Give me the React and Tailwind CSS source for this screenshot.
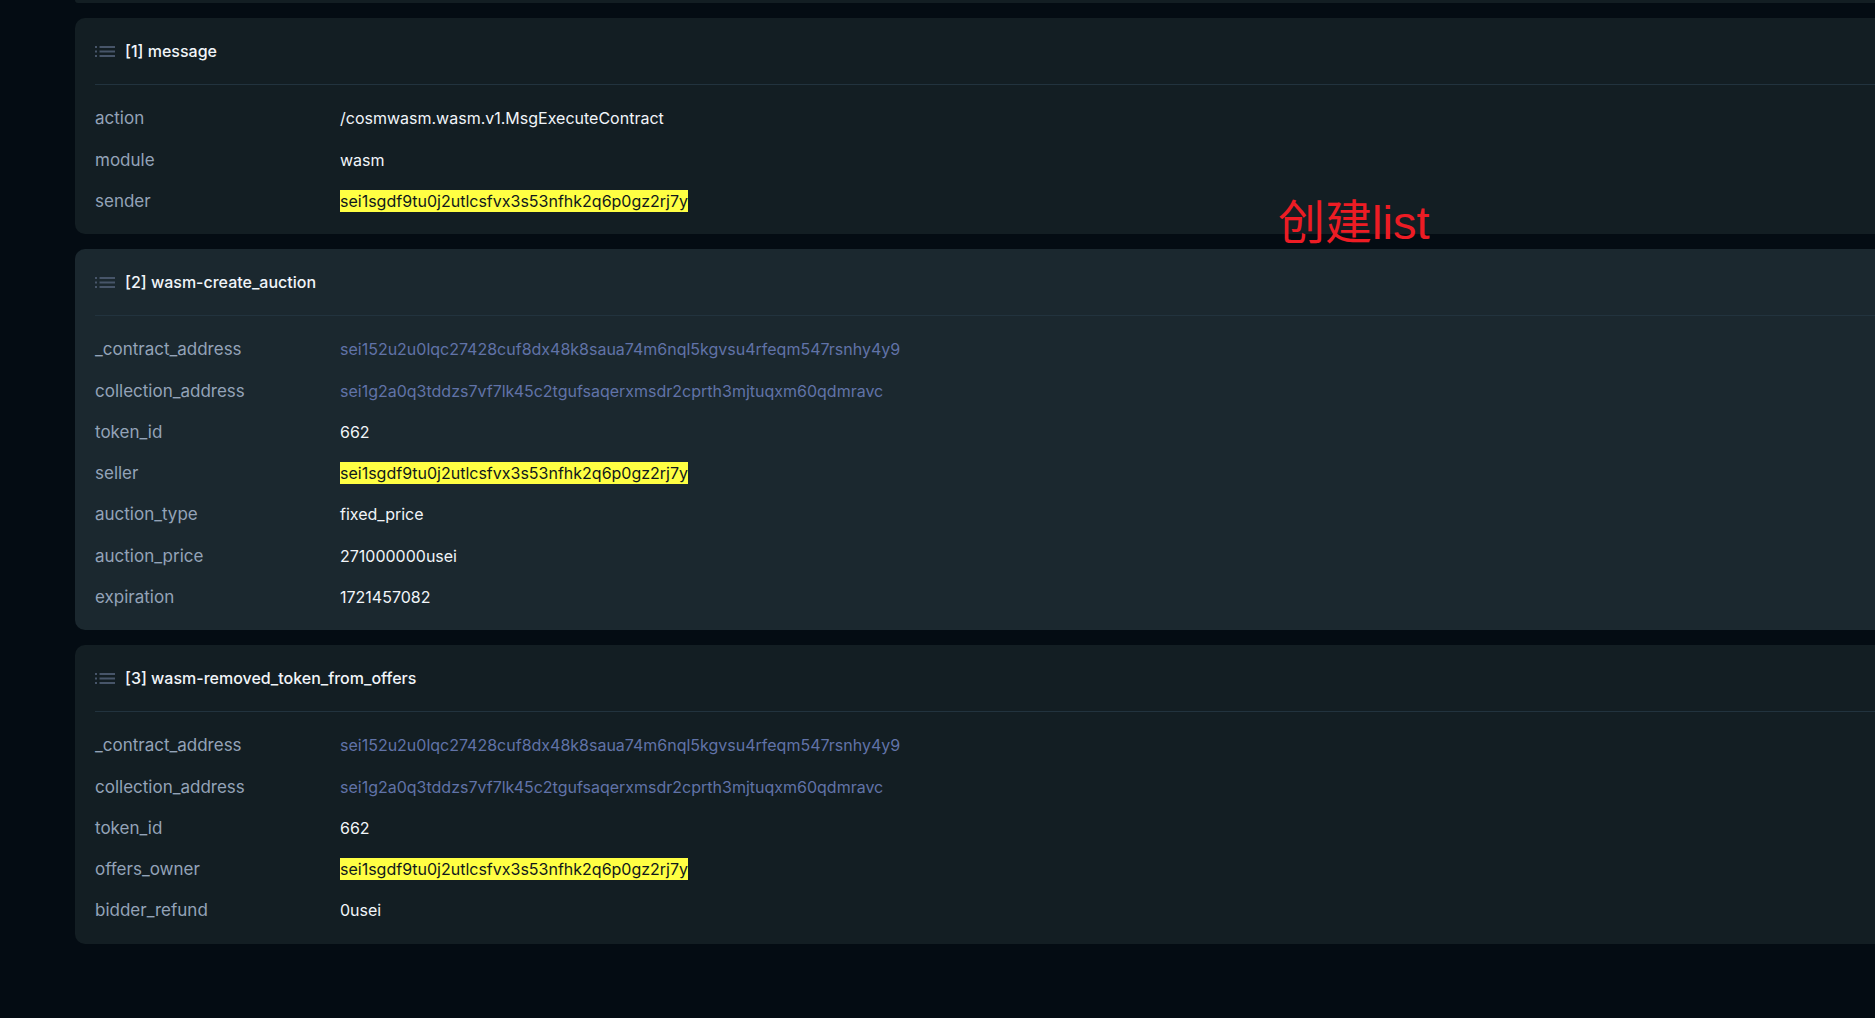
const SENDER = "sei1sgdf9tu0j2utlcsfvx3s53nfhk2q6p0gz2rj7y";
const CONTRACT = "sei152u2u0lqc27428cuf8dx48k8saua74m6nql5kgvsu4rfeqm547rsnhy4y9";
const COLLECTION = "sei1g2a0q3tddzs7vf7lk45c2tgufsaqerxmsdr2cprth3mjtuqxm60qdmravc";

const EVENTS = [
  {
    title: "[1] message",
    rows: [
      ["action", "/cosmwasm.wasm.v1.MsgExecuteContract"],
      ["module", "wasm"],
      ["sender", SENDER, "mark"],
    ],
  },
  {
    title: "[2] wasm-create_auction",
    active: true,
    rows: [
      ["_contract_address", CONTRACT, "link"],
      ["collection_address", COLLECTION, "link"],
      ["token_id", "662"],
      ["seller", SENDER, "mark"],
      ["auction_type", "fixed_price"],
      ["auction_price", "271000000usei"],
      ["expiration", "1721457082"],
    ],
  },
  {
    title: "[3] wasm-removed_token_from_offers",
    rows: [
      ["_contract_address", CONTRACT, "link"],
      ["collection_address", COLLECTION, "link"],
      ["token_id", "662"],
      ["offers_owner", SENDER, "mark"],
      ["bidder_refund", "0usei"],
    ],
  },
];

function ListIcon() {
  return (
    <svg
      className="h-5 w-5 shrink-0"
      viewBox="0 0 20 20"
      fill="#475569"
      aria-hidden="true"
    >
      <rect x="0" y="5" width="2" height="2" />
      <rect x="4.5" y="5" width="15.5" height="2" />
      <rect x="0" y="9.5" width="2" height="2" />
      <rect x="4.5" y="9.5" width="15.5" height="2" />
      <rect x="0" y="14" width="2" height="2" />
      <rect x="4.5" y="14" width="15.5" height="2" />
    </svg>
  );
}

function Value({ text, kind }) {
  if (kind === "link") {
    return (
      <a href={"#" + text} className="text-[#6173a8]">
        {text}
      </a>
    );
  }
  if (kind === "mark") {
    return (
      <mark className="inline-block bg-[#ffff43] leading-[22px] text-[#10181c]">
        {text}
      </mark>
    );
  }
  return <span className="text-[#f1f5f9]">{text}</span>;
}

function EventCard({ title, rows, active }) {
  return (
    <section
      className={
        "rounded-l-[10px] pb-[13px] pl-5 " +
        (active ? "bg-[#1b282f]" : "bg-[#131e23]")
      }
    >
      <header className="flex h-[67px] items-center gap-[10px] border-b border-[#22333e]">
        <ListIcon />
        <h2 className="text-[16px] leading-[22px] font-medium text-[#f1f5f9]">
          {title}
        </h2>
      </header>
      <table className="mt-3 w-full border-collapse text-left">
        <tbody>
          {rows.map(([label, text, kind]) => (
            <tr key={label} className="h-[41px] [&:nth-child(4n+1)]:h-[42px]">
              <th
                scope="row"
                className="w-[245px] p-0 align-middle text-[17px] leading-[22px] font-normal text-[#94a3b8]"
              >
                {label}
              </th>
              <td className="p-0 align-middle text-[16px] leading-[22px]">
                <Value text={text} kind={kind} />
              </td>
            </tr>
          ))}
        </tbody>
      </table>
    </section>
  );
}

export default function App() {
  return (
    <main className="relative min-h-screen overflow-hidden bg-[#040c13] pl-[75px] font-['Inter',sans-serif]">
      <div className="h-[3px] rounded-bl-[10px] bg-[#131e23]" />
      <div className="mt-[15px] flex flex-col gap-[15px]">
        {EVENTS.map((event) => (
          <EventCard key={event.title} {...event} />
        ))}
      </div>
      <p className="absolute top-[188px] left-[1278px] text-[47px] leading-[70px] font-normal whitespace-nowrap text-[#ed1c24] font-['Liberation_Sans','Noto_Sans_CJK_SC',sans-serif]">
        创建list
      </p>
    </main>
  );
}
